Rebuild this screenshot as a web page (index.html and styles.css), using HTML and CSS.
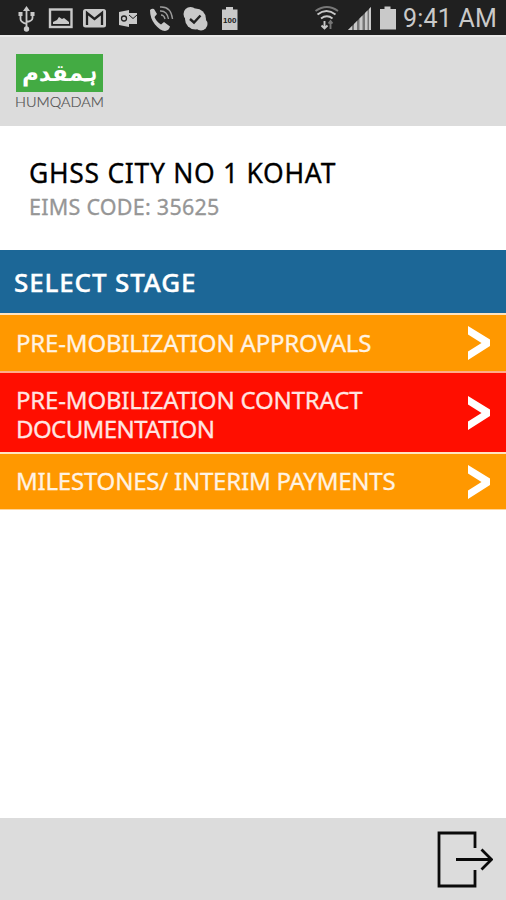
FILE: index.html
```html
<!DOCTYPE html>
<html lang="en">
<head>
<meta charset="utf-8">
<title>Humqadam</title>
<link rel="stylesheet" href="styles.css">
</head>
<body>
<div class="status">
  <svg class="status-icons" width="506" height="35" viewBox="0 0 506 35" fill="#c9c9c9">
    <g fill="none" stroke="#c9c9c9" stroke-width="1.8">
      <path d="M26.5 9v19M20.5 14v5q0 3 6 5M32.500 14v4q0 3-6 4"/>
    </g>
    <path d="M26.500 6l3.500 5h-7zM18.500 12h4v4h-4zM30.500 12h4v4h-4z"/><circle cx="26.500" cy="29" r="2.700"/>
    <rect x="50" y="9.500" width="21.500" height="17.500" fill="none" stroke="#c9c9c9" stroke-width="2.400"/>
    <path d="M53 24v-2l4-2 2-3 3 2 2-1 5 4v2z"/>
    <rect x="83" y="9" width="23" height="18.500" rx="2.500"/>
    <path d="M87 25V13l7.500 6 7.500-6v12" fill="none" stroke="#202020" stroke-width="2.300"/>
    <path d="M119 12l10-2v17l-10-2z"/><rect x="128" y="13" width="9" height="11"/>
    <circle cx="124" cy="18.500" r="2.500" fill="none" stroke="#202020" stroke-width="1.300"/>
    <path d="M129 15l4 3.500 4-3.500" fill="none" stroke="#202020"/>
    <path d="M150 10q2-2 4-1l3 5-2.500 3q2 5 6.500 7.500l3-2.500 6 4.500q-1 4-5 4.500-5-.5-10-6.500t-5-14.500z"/>
    <g fill="none" stroke="#9a9a9a" stroke-width="1.400"><path d="M160 7q11-1 12.500 12M160 11q7-.5 8.500 8M161 15q3 0 4 4"/></g>
    <circle cx="195.500" cy="19" r="10.500"/><circle cx="190.500" cy="14" r="7"/><circle cx="201" cy="24" r="6.500"/>
    <path d="M190 19l4 3.500 6.500-7" fill="none" stroke="#202020" stroke-width="2.400"/>
    <path d="M222 9.500h4V7h7v2.500h4.500V30H222z"/>
    <text class="battery-text" x="229.700" y="22.500" text-anchor="middle" fill="#202020">100</text>
    <g fill="none" stroke="#c9c9c9" stroke-width="1.900">
      <path d="M315.500 11q11.500-8 22.500 0" stroke="#777"/><path d="M317.500 14.500q9-7 18 0M321 18.500q6-4.500 11.500 0"/>
      <path d="M324.500 21v7M321.500 25.500l3 3 3-3"/><path d="M330.500 29v-8M328.500 23.500l2-2.500 2 2.500" stroke="#777"/>
    </g>
    <path d="M348 30l23-23v23z" fill="#777"/>
    <path d="M348 30l4-4v4zM354 24l3-3v9h-3zM359.500 18.500l3-3V30h-3zM365 13l2.500-2.500V30H365zM369 9l2-2v23h-2z"/>
    <path d="M380 9h4.500V6.500h6V9h5.500v20.500h-16z"/>
  </svg>
  <span class="clock">9:41 AM</span>
</div>
<header class="header">
  <div class="logo">
    <div class="logo-mark" lang="ur" dir="rtl">ہمقدم</div>
    <div class="logo-name">HUMQADAM</div>
  </div>
</header>
<main class="main">
  <section class="school">
    <h1>GHSS CITY NO 1 KOHAT</h1>
    <p>EIMS CODE: 35625</p>
  </section>
  <h2 class="stage-title">SELECT STAGE</h2>
  <div class="stage">
    <div class="label">PRE-MOBILIZATION APPROVALS</div>
    <svg class="chevron" width="22" height="34" viewBox="0 0 22 34"><path d="M0 0l22 13.500v6.500L0 34v-8.500L13.500 17 0 8.500z"/></svg>
  </div>
  <div class="stage red">
    <div class="label"><span>PRE-MOBILIZATION CONTRACT</span><span class="tight">DOCUMENTATION</span></div>
    <svg class="chevron" width="22" height="34" viewBox="0 0 22 34"><path d="M0 0l22 13.500v6.500L0 34v-8.500L13.500 17 0 8.500z"/></svg>
  </div>
  <div class="stage last">
    <div class="label">MILESTONES/ INTERIM PAYMENTS</div>
    <svg class="chevron" width="22" height="34" viewBox="0 0 22 34"><path d="M0 0l22 13.500v6.500L0 34v-8.500L13.500 17 0 8.500z"/></svg>
  </div>
</main>
<footer class="footer">
  <svg width="56" height="58" viewBox="0 0 56 58" fill="none" stroke="#0a0a0a" stroke-width="2.800"><path d="M38 18V3H2v53h36V40"/><path d="M19 29.500h35M44.500 19.500l10 10-10 10"/></svg>
</footer>
</body>
</html>
```
FILE: styles.css
```css
* { box-sizing: border-box; }
body {
  margin: 0;
  width: 506px;
  height: 900px;
  display: flex;
  flex-direction: column;
  background: #fff;
  font-family: "Noto Sans", "Open Sans", sans-serif;
  overflow: hidden;
  white-space: nowrap;
}
h1, h2, p { margin: 0; font-weight: 400; }
.status {
  height: 35px;
  background: #202020;
  display: grid;
  flex: none;
}
.status-icons, .clock { grid-area: 1 / 1; }
.battery-text { font: bold 8px "Liberation Sans", sans-serif; }
.clock {
  justify-self: start;
  margin-left: 403px;
  font: 25px/37px Roboto, sans-serif;
  letter-spacing: 0.2px;
  color: #c9c9c9;
}
.header {
  height: 91px;
  flex: none;
  background: #dcdcdc;
  border-top: 2px solid #e9e9e9;
  padding: 17px 15px;
}
.logo { width: 89px; }
.logo-mark {
  width: 87px;
  height: 38px;
  margin-left: 1px;
  background: #43ab43;
  color: #fff;
  font: bold 23px/38px "DejaVu Sans", sans-serif;
  text-align: center;
}
.logo-name {
  font: 300 14.5px/20px Lato, sans-serif;
  color: #505050;
  -webkit-text-stroke: 0.2px;
}
.main { flex: 1; }
.school { height: 124px; padding: 30px 0 0 29px; }
.school h1 {
  font-size: 26.5px;
  line-height: 35px;
  color: #000;
  letter-spacing: 0.7px;
  -webkit-text-stroke: 0.3px;
}
.school p {
  font-size: 21.5px;
  line-height: 32px;
  color: #969696;
  letter-spacing: 0.25px;
  -webkit-text-stroke: 0.3px;
}
.stage-title {
  height: 63px;
  padding-left: 14px;
  background: #1c6797;
  color: #fff;
  font-size: 26px;
  line-height: 65px;
  font-weight: 500;
  letter-spacing: 0.85px;
  -webkit-text-stroke: 0.4px;
}
.stage {
  display: flex;
  align-items: center;
  justify-content: space-between;
  height: 58px;
  padding: 0 16px;
  background: #ff9800;
  border-top: 2px solid #ffe3c0;
  color: #fff3e3;
  font-size: 24px;
  line-height: 29px;
  letter-spacing: -0.18px;
  -webkit-text-stroke: 0.3px;
}
.label { padding-bottom: 1px; }
.label span { display: block; }
.label .tight { letter-spacing: -0.6px; }
.stage.red { height: 81px; background: #ff0e00; border-top-color: #ffad88; color: #ffe5e2; }
.stage.red .label { padding: 2px 0 0; }
.stage.last { border-bottom: 1px solid #ffd59a; letter-spacing: -0.21px; }
.stage.last .label { padding-bottom: 2px; }
.chevron { fill: #fff; flex: none; }
.footer {
  height: 82px;
  flex: none;
  background: #dcdcdc;
  display: flex;
  justify-content: flex-end;
  padding: 12px 13px 0 0;
}
```
